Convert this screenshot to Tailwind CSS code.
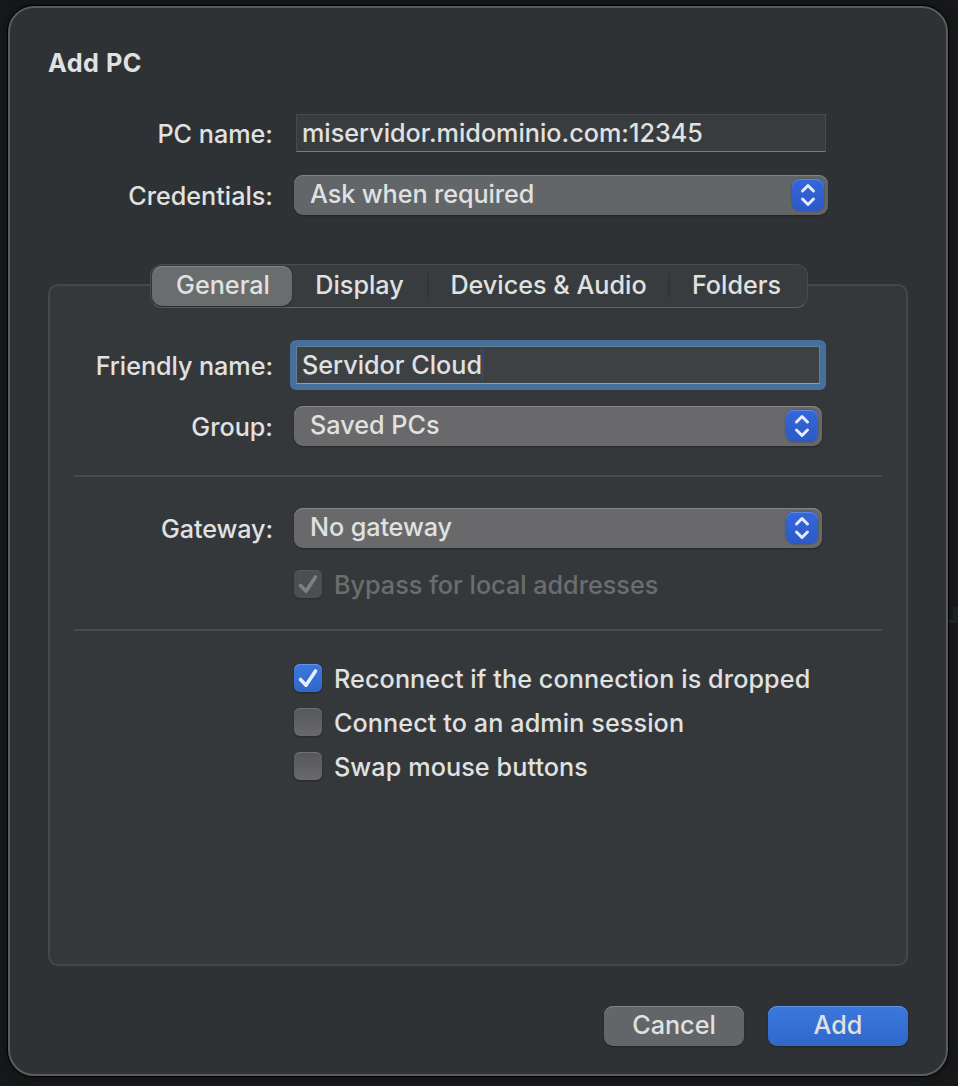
<!DOCTYPE html>
<html lang="en">

<head>
    <meta charset="UTF-8">
    <meta name="viewport" content="width=device-width, initial-scale=1.0">
    <title>Add PC</title>
    <script src="https://cdn.jsdelivr.net/npm/@tailwindcss/browser@4"></script>
</head>

<body class="relative w-[958px] h-[1086px] overflow-hidden bg-[#17181a] pl-2 pt-1.5 font-['Inter',sans-serif] text-[25.2px] font-[480] leading-[38px] text-[#e0e1e1]">

    <!-- edge of the window behind the dialog -->
    <div class="absolute left-[949px] top-[607px] w-[9px] h-4 border-b-[3px] border-[#232426]">
        <div class="ml-1 w-[5px] h-4 bg-[#1f2022]"></div>
    </div>

    <!-- dialog -->
    <main class="w-[940px] h-[1070px] rounded-[26px] border-2 border-[#5a5d5e] bg-[#2f3234] px-[38px] pt-9 shadow-[0_0_0_1px_#000,0_0_10px_#0008]">

        <h1 class="h-[38px] font-[750] tracking-[0.5px]">Add PC</h1>

        <div class="flex items-center mt-8 h-[38px]">
            <label for="pc-name" class="w-[225px] mr-[23px] pt-0.5 text-right">PC name:</label>
            <div id="pc-name" class="w-[530px] h-[38px] border border-[#484b4d] border-b-[#7b7d7e] bg-[#393c3e] pl-[5px] leading-[37px]">miservidor.midominio.com:12345</div>
        </div>

        <div class="flex mt-[23px] h-10">
            <label for="credentials" class="w-[225px] mr-[21px] pt-0.5 text-right">Credentials:</label>
            <div id="credentials" class="flex justify-between w-[534px] h-10 rounded-[9px] bg-[#636668] pl-4 pr-1 pt-1 shadow-[inset_0_1px_0_#808284,0_1px_2px_#0005]">
                <span class="-mt-1 tracking-[-0.08px]">Ask when required</span>
                <span class="w-8 h-8 rounded-[8px] bg-linear-to-b from-[#3567db] to-[#2b5ac6] shadow-[inset_0_1px_0_#5e88e4,0_0_2px_#0006]">
                    <svg width="32" height="32" viewBox="0 0 32 32" fill="none" stroke="#e4ecfb" stroke-width="3" stroke-linecap="round" stroke-linejoin="round">
                        <path d="M10.5 12 16 6.500l5.500 5.500M10.500 20 16 25.500l5.500-5.500" />
                    </svg>
                </span>
            </div>
        </div>

        <!-- tabs -->
        <div class="relative flex w-[658px] h-11 mt-[49px] ml-[102px] rounded-[12px] border border-[#494c4e] border-b-[#626567] bg-[#393c3e] leading-[41px]">
            <div class="w-[140px] h-10 ml-px mt-px rounded-[10px] bg-[#6a6d6e] text-center shadow-[inset_0_1px_0_#828485,0_1px_2px_#0006]"><span class="relative -top-px left-px">General</span></div>
            <div class="w-[135px] text-center">Display</div>
            <div class="w-0.5 h-[25px] mt-2 bg-[#323537]"></div>
            <div class="w-[239px] text-center">Devices &amp; Audio</div>
            <div class="w-0.5 h-[25px] mt-2 bg-[#323537]"></div>
            <div class="w-[133px] text-center">Folders</div>
        </div>

        <!-- general panel -->
        <section class="w-[860px] h-[682px] -mt-6 rounded-[10px] border-2 border-[#45484a] bg-[#35383a] px-6 pt-[54px]">
            <div class="flex h-[50px]">
                <label for="friendly-name" class="w-[199px] mr-[17px] pt-[7px] text-right tracking-[-0.06px]">Friendly name:</label>
                <div class="w-[536px] h-[50px] rounded-[6px] bg-[#44709b] p-1.5">
                    <div id="friendly-name" class="flex h-[38px] border border-[#648097] border-b-[#84a0b5] bg-[#3e4143] pl-[5px] leading-[37px]">
                        <span>Servidor Cloud</span><span class="w-[3px] h-[31px] -ml-px mt-[2px] bg-[#34486f]"></span>
                    </div>
                </div>
            </div>

            <div class="flex mt-4 h-10">
                <label for="group" class="w-[199px] mr-[21px] pt-0.5 text-right">Group:</label>
                <div id="group" class="flex justify-between w-[528px] h-10 rounded-[9px] bg-[#69696b] pl-4 pr-1 pt-1 shadow-[inset_0_1px_0_#868688,0_1px_2px_#0005]">
                    <span class="-mt-1">Saved PCs</span>
                    <span class="w-8 h-8 rounded-[8px] bg-linear-to-b from-[#3567db] to-[#2b5ac6] shadow-[inset_0_1px_0_#5e88e4,0_0_2px_#0006]">
                        <svg width="32" height="32" viewBox="0 0 32 32" fill="none" stroke="#e4ecfb" stroke-width="3" stroke-linecap="round" stroke-linejoin="round">
                            <path d="M10.5 12 16 6.500l5.500 5.500M10.500 20 16 25.500l5.500-5.500" />
                        </svg>
                    </span>
                </div>
            </div>

            <div class="w-[808px] h-0.5 mt-[29px] bg-[#484b4d]"></div>

            <div class="flex mt-[31px] h-10">
                <label for="gateway" class="w-[199px] mr-[21px] pt-0.5 text-right tracking-[-0.1px]">Gateway:</label>
                <div id="gateway" class="flex justify-between w-[528px] h-10 rounded-[9px] bg-[#69696b] pl-4 pr-1 pt-1 shadow-[inset_0_1px_0_#868688,0_1px_2px_#0005]">
                    <span class="-mt-1 tracking-[-0.1px]">No gateway</span>
                    <span class="w-8 h-8 rounded-[8px] bg-linear-to-b from-[#3567db] to-[#2b5ac6] shadow-[inset_0_1px_0_#5e88e4,0_0_2px_#0006]">
                        <svg width="32" height="32" viewBox="0 0 32 32" fill="none" stroke="#e4ecfb" stroke-width="3" stroke-linecap="round" stroke-linejoin="round">
                            <path d="M10.5 12 16 6.500l5.500 5.500M10.500 20 16 25.500l5.500-5.500" />
                        </svg>
                    </span>
                </div>
            </div>

            <div class="flex items-center gap-3 mt-[22px] ml-[220px] h-7 text-[#6b6d6f]">
                <span class="w-7 h-7 rounded-[6px] bg-[#4c4e50] shadow-[inset_0_1px_0_#58595b,0_1px_2px_#0003]">
                    <svg width="28" height="28" viewBox="0 0 28 28" fill="none" stroke="#7f8182" stroke-width="3.600" stroke-linecap="round" stroke-linejoin="round">
                        <path d="M6.500 15.500 12 21.200 21.500 7" />
                    </svg>
                </span>
                <span class="pt-0.5">Bypass for local addresses</span>
            </div>

            <div class="w-[808px] h-0.5 mt-[31px] bg-[#484b4d]"></div>

            <div class="flex flex-col gap-4 mt-[33px] ml-[220px] tracking-[0.09px]">
                <div class="flex items-center gap-3 h-7">
                    <span class="w-7 h-7 rounded-[6px] bg-linear-to-b from-[#3b78dd] to-[#3068c8] shadow-[inset_0_1px_0_#6293e4,0_1px_2px_#0005]">
                        <svg width="28" height="28" viewBox="0 0 28 28" fill="none" stroke="#e6effc" stroke-width="3.600" stroke-linecap="round" stroke-linejoin="round">
                            <path d="M6.500 15.500 12 21.200 21.500 7" />
                        </svg>
                    </span>
                    <span class="pt-0.5">Reconnect if the connection is dropped</span>
                </div>
                <div class="flex items-center gap-3 h-7">
                    <span class="w-7 h-7 rounded-[6px] bg-linear-to-b from-[#565759] to-[#69696b] shadow-[inset_0_1px_0_#707173,0_1px_2px_#0005]"></span>
                    <span class="pt-0.5">Connect to an admin session</span>
                </div>
                <div class="flex items-center gap-3 h-7">
                    <span class="w-7 h-7 rounded-[6px] bg-linear-to-b from-[#565759] to-[#69696b] shadow-[inset_0_1px_0_#707173,0_1px_2px_#0005]"></span>
                    <span class="pt-0.5">Swap mouse buttons</span>
                </div>
            </div>
        </section>

        <!-- actions -->
        <div class="flex justify-end gap-6 mt-10 w-[860px]">
            <button class="w-[140px] h-10 rounded-[9px] bg-[#636668] pb-0.5 shadow-[inset_0_1px_0_#808284,0_1px_2px_#0005]">Cancel</button>
            <button class="w-[140px] h-10 rounded-[9px] bg-linear-to-b from-[#3b78dd] to-[#3068c8] pb-0.5 shadow-[inset_0_1px_0_#6293e4,0_1px_2px_#0005]">Add</button>
        </div>
    </main>

</body>

</html>
